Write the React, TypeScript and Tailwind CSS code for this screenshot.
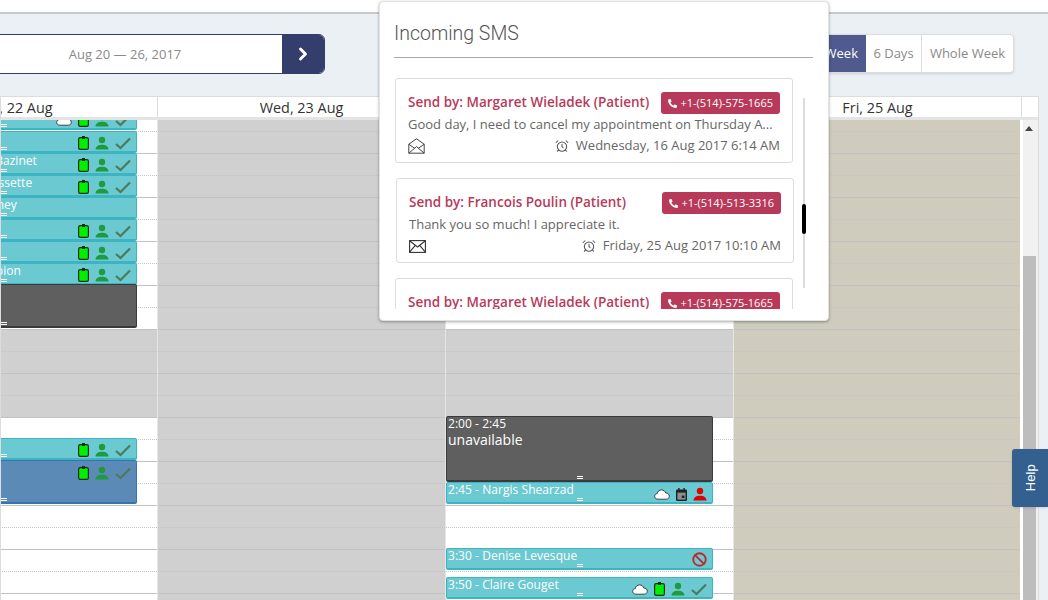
import React from 'react';
import { AlarmClock, ChevronRight, Ban } from 'lucide-react';
import { FaPhoneAlt } from 'react-icons/fa';

const ClipboardIcon = () => (
  <svg width="11" height="14" viewBox="0 0 11 14" className="shrink-0">
    <rect x="0.6" y="1.6" width="9.8" height="11.8" rx="1.6" fill="#00f000" stroke="#1c2b1c" strokeWidth="1.2" />
    <rect x="4" y="0" width="3" height="3" fill="#1c2b1c" />
  </svg>
);

const PersonIcon = ({ color = '#1f9a3c' }: { color?: string }) => (
  <svg width="14" height="14" viewBox="0 0 15 14" className="shrink-0">
    <circle cx="7.5" cy="3.8" r="3.4" fill={color} />
    <path d="M0.5 14 C0.8 10.2 4 9 7.5 9 C11 9 14.2 10.2 14.5 14 Z" fill={color} />
  </svg>
);

const CheckIcon = () => (
  <svg width="16" height="13" viewBox="0 0 16 13" className="shrink-0">
    <path d="M1 7 L5.5 11 L15 1.5" fill="none" stroke="#4f7a5a" strokeWidth="2.2" />
  </svg>
);

const CloudIcon = () => (
  <svg width="16" height="11" viewBox="0 0 16 11" className="shrink-0">
    <path
      d="M4 10.2 C1.8 10.2 0.7 8.8 0.7 7.3 C0.7 5.8 1.8 4.7 3.2 4.6 C3.6 2.4 5.4 0.9 7.6 0.9 C9.6 0.9 11.2 2.2 11.7 4 C13.8 4 15.3 5.4 15.3 7.2 C15.3 8.9 14 10.2 12.2 10.2 Z"
      fill="#fff"
      stroke="#333"
      strokeWidth="0.9"
    />
  </svg>
);

const CalendarIcon = () => (
  <svg width="11" height="13" viewBox="0 0 11 13" className="shrink-0">
    <rect x="0" y="1.5" width="11" height="11.5" rx="1.2" fill="#222" />
    <rect x="1.4" y="4.6" width="8.2" height="7" fill="#8a8f90" />
    <rect x="5.8" y="7.6" width="2.6" height="2.4" fill="#222" />
    <rect x="2.2" y="0" width="1.4" height="2.4" fill="#222" />
    <rect x="7.4" y="0" width="1.4" height="2.4" fill="#222" />
  </svg>
);

const OpenEnvelope = () => (
  <svg width="17" height="16" viewBox="0 0 17 16" fill="none" stroke="#444" strokeWidth="1">
    <path d="M0.8 6.2 L8.5 0.8 L16.2 6.2 V15.2 H0.8 Z" />
    <path d="M0.8 6.2 L6.5 10.2 M16.2 6.2 L10.5 10.2 M0.8 15.2 L8.5 8.6 L16.2 15.2" />
  </svg>
);

const ClosedEnvelope = () => (
  <svg width="17" height="13" viewBox="0 0 17 13" fill="none" stroke="#333" strokeWidth="1.1">
    <rect x="0.6" y="0.6" width="15.8" height="11.8" />
    <path d="M0.6 0.8 L8.5 7 L16.4 0.8 M0.6 12.2 L6.3 5.4 M16.4 12.2 L10.7 5.4" />
  </svg>
);

type Ev = {
  top: number;
  h: number;
  text?: string;
  sub?: string;
  icons?: React.ReactNode;
  tone?: 'teal' | 'dark' | 'blue';
};

const done = (
  <>
    <ClipboardIcon />
    <PersonIcon />
    <CheckIcon />
  </>
);

const tones = {
  teal: 'bg-[#6bc9d2] border-[#3db4c1]',
  dark: 'bg-[#5f5f5f] border-[#3a3a3a]',
  blue: 'bg-[#5c8ab6] border-[#3574ae]',
};

const EventBox = ({ ev }: { ev: Ev }) => (
  <div
    style={{ top: ev.top, height: ev.h }}
    className={`absolute left-0 w-[267px] rounded-[2px] border border-b-2 overflow-hidden ${tones[ev.tone || 'teal']}`}
  >
    {ev.text && (
      <div className="pl-px text-[12px] font-medium tracking-[0.05px] leading-[13px] text-white whitespace-nowrap">{ev.text}</div>
    )}
    {ev.sub && <div className="pl-px mt-[1px] text-[14px] font-medium leading-[18px] text-white whitespace-nowrap">{ev.sub}</div>}
    {ev.icons && <div className="absolute right-[5px] bottom-[1px] flex items-center gap-[6px]">{ev.icons}</div>}
    <div className="absolute left-[130px] bottom-[1px] w-[6px] h-[3px] border-y border-white" />
  </div>
);

const rows = Array.from({ length: 22 }, (_, i) => i);

type Col = { bg: string; gray?: boolean; last?: boolean; events?: Ev[] };

const Column = ({ bg, gray, last, events = [] }: Col) => (
  <div className={`relative w-[288px] h-[480px] shrink-0 overflow-hidden ${last ? 'border-r-2 border-white' : 'border-r border-[#e6e6e6]'} ${bg}`}>
    <div className="mt-[-10px]">
      {rows.map((i) => {
        const inGray = gray && i >= 10 && i <= 13;
        return (
          <div
            key={i}
            className={`h-[22px] border-b ${i % 2 === 0 ? 'border-dotted border-[#c4c4c4]' : 'border-solid border-[#c2c2c2]'} ${inGray ? 'bg-[#d0d0d0]' : ''}`}
          />
        );
      })}
    </div>
    {events.map((ev) => (
      <EventBox key={ev.top} ev={ev} />
    ))}
  </div>
);

const firstCol: Ev[] = [
  { top: -12, h: 22, icons: <><CloudIcon />{done}</> },
  { top: 11, h: 22, icons: done },
  { top: 33, h: 22, text: '1:10 - Marie-Claudine Bazinet', icons: done },
  { top: 55, h: 22, text: '1:30 - Marie-Louise Dussette', icons: done },
  { top: 77, h: 22, text: '1:50 - Catherine Mahoney' },
  { top: 99, h: 22, icons: done },
  { top: 121, h: 22, icons: done },
  { top: 143, h: 22, text: '2:50 - Marie-Joe Champion', icons: done },
  { top: 164, h: 44, tone: 'dark' },
  { top: 318, h: 22, icons: done },
  { top: 340, h: 44, tone: 'blue', icons: <div className="flex items-center gap-[6px] mb-[21px]">{done}</div> },
];

const thirdCol: Ev[] = [
  { top: 296, h: 66, tone: 'dark', text: '2:00 - 2:45', sub: 'unavailable' },
  { top: 362, h: 22, text: '2:45 - Nargis Shearzad', icons: <><CloudIcon /><CalendarIcon /><PersonIcon color="#e00000" /></> },
  { top: 428, h: 22, text: '3:30 - Denise Levesque', icons: <Ban size={15} strokeWidth={3} color="#c0272d" /> },
  { top: 457, h: 22, text: '3:50 - Claire Gouget', icons: <><CloudIcon />{done}</> },
];

const SmsCard = ({ name, phone, msg, date, open, shift }: { name: string; phone: string; msg: string; date: string; open?: boolean; shift?: boolean }) => (
  <div className={`w-[398px] h-[85px] shrink-0 rounded-[3px] border border-[#dcdcdc] bg-white pl-[12px] pr-[12px] pt-[13px] ${shift ? 'ml-px' : ''}`}>
    <div className="flex items-start justify-between h-[22px]">
      <span className="text-[13.5px] leading-[20px] font-semibold text-[#b83a5a]">{name}</span>
      <span className="flex items-center gap-[3px] h-[22px] px-[7px] rounded-[3px] bg-[#b83a5a] text-white text-[11px]">
        <FaPhoneAlt size={9} />
        {phone}
      </span>
    </div>
    <div className="text-[13px] leading-[20px] text-[#666] whitespace-nowrap overflow-hidden text-ellipsis">{msg}</div>
    <div className="mt-[1px] flex items-center justify-between h-[22px]">
      {open ? <OpenEnvelope /> : <ClosedEnvelope />}
      <span className="flex items-center gap-[7px] text-[13px] text-[#666]">
        <AlarmClock size={14} strokeWidth={1.8} color="#555" />
        {date}
      </span>
    </div>
  </div>
);

export default function App() {
  return (
    <div className="relative w-[1048px] h-[600px] overflow-hidden bg-[#ebf0f5] font-['Open_Sans',sans-serif]">
      <div className="h-[14px] bg-white border-b-2 border-[#c8c8c8]" />

      <div className="h-[82px] flex items-start justify-between pt-[20px] pr-[34px]">
        <div className="flex h-[40px] w-[360px] ml-[-35px] rounded-[6px] overflow-hidden border border-[#343e6d] bg-white">
          <div className="flex-1 flex items-center justify-center pl-[2px] pt-[1px] text-[13px] text-[#8a8a8a]">Aug 20 — 26, 2017</div>
          <div className="w-[42px] flex items-center justify-center bg-[#343e6d]">
            <ChevronRight size={20} strokeWidth={3.5} color="#fff" />
          </div>
        </div>
        <div className="flex h-[39px] rounded-[4px] overflow-hidden border border-[#dcdcdc] bg-white text-[13px] text-[#8a8a8a] shadow-sm">
          <div className="flex items-center pl-[12px] pr-[8px] bg-[#4f5a8f] text-white">Week</div>
          <div className="flex items-center w-[56px] justify-center border-r border-[#dcdcdc]">6 Days</div>
          <div className="flex items-center w-[91px] justify-center">Whole Week</div>
        </div>
      </div>

      <div className="w-[1039px] border-x border-[#dcdcdc] border-t overflow-hidden">
        <div className="flex ml-[-131px] h-[20px] bg-white text-[14.4px] leading-[21px] text-[#333] border-b-[3px] border-[#e4e4e4] box-content">
          {['Tue, 22 Aug', 'Wed, 23 Aug', 'Thu, 24 Aug', 'Fri, 25 Aug'].map((d) => (
            <div key={d} className="w-[288px] shrink-0 text-center border-r border-[#dcdcdc]">
              {d}
            </div>
          ))}
        </div>
        <div className="flex ml-[-131px]">
          <Column bg="bg-white" gray events={firstCol} />
          <Column bg="bg-[#d0d0d0]" />
          <Column bg="bg-white" gray events={thirdCol} />
          <Column bg="bg-[#cfccbd]" last />
          <div className="relative w-[16px] h-[480px] shrink-0 bg-[#f1f1f1] border-l border-white">
            <div className="ml-[2px] mt-[6px] w-0 h-0 border-x-[4px] border-b-[5px] border-x-transparent border-b-[#444]" />
            <div className="absolute left-0 top-[136px] w-[13px] h-[344px] bg-[#bdbdbd]" />
          </div>
        </div>
      </div>

      <div className="absolute right-0 top-[449px] flex items-center justify-center w-[36px] h-[58px] rounded-l-[3px] bg-[#34608f] shadow">
        <span className="-rotate-90 text-[13px] text-white font-['Liberation_Sans',sans-serif]">Help</span>
      </div>

      <div className="absolute left-[379px] top-[1px] w-[450px] h-[320px] rounded-[4px] bg-white border border-[#e2e2e2] shadow-[0_1px_3px_rgba(0,0,0,0.35)]">
        <div className="ml-[14px] mr-[15px] h-[56px] border-b border-[#aaa] pt-[18px] text-[19.5px] leading-[27px] font-['Roboto',sans-serif] font-light text-[#555]">
          Incoming SMS
        </div>
        <div className="relative h-[237px] mt-[14px] ml-[15px] overflow-hidden">
          <div className="flex flex-col gap-[15px] pt-[6px]">
            <SmsCard
              open
              name="Send by: Margaret Wieladek (Patient)"
              phone="+1-(514)-575-1665"
              msg="Good day, I need to cancel my appointment on Thursday A..."
              date="Wednesday, 16 Aug 2017 6:14 AM"
            />
            <SmsCard
              shift
              name="Send by: Francois Poulin (Patient)"
              phone="+1-(514)-513-3316"
              msg="Thank you so much! I appreciate it."
              date="Friday, 25 Aug 2017 10:10 AM"
            />
            <SmsCard
              open
              name="Send by: Margaret Wieladek (Patient)"
              phone="+1-(514)-575-1665"
              msg="Good day, I need to cancel my appointment on Thursday A..."
              date="Wednesday, 16 Aug 2017 6:14 AM"
            />
          </div>
          <div className="absolute left-[408px] top-[26px] w-[2px] h-[190px] bg-[#dcdcdc]" />
          <div className="absolute left-[407px] top-[132px] w-[4px] h-[30px] rounded-[2px] bg-black" />
        </div>
      </div>
    </div>
  );
}
